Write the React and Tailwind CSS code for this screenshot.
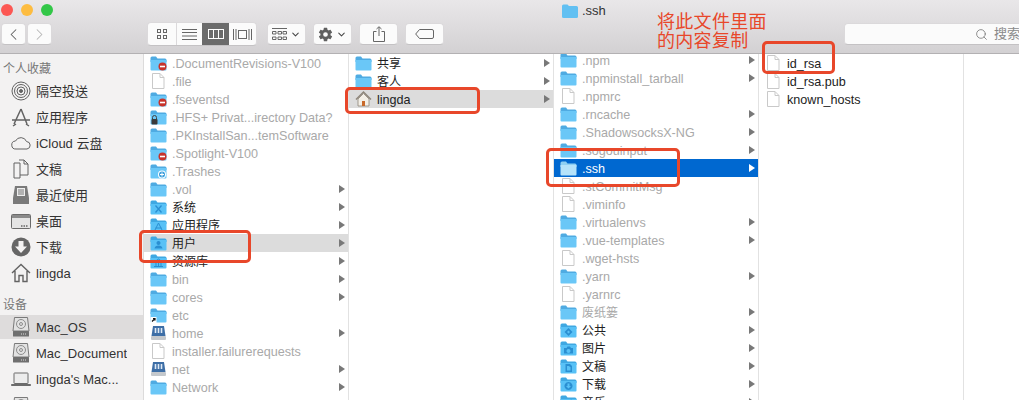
import React from 'react';
import { Search, ChevronLeft, ChevronRight, ChevronDown } from 'lucide-react';
import { IoSettingsSharp } from 'react-icons/io5';

const FONT = "font-['Liberation_Sans','Noto_Sans_CJK_SC',sans-serif]";

const column1 = [
  { name: '.DocumentRevisions-V100', dim: true, badge: 'minus' },
  { name: '.file', dim: true, file: true },
  { name: '.fseventsd', dim: true, badge: 'minus' },
  { name: '.HFS+ Privat...irectory Data?', dim: true, badge: 'lock' },
  { name: '.PKInstallSan...temSoftware', dim: true },
  { name: '.Spotlight-V100', dim: true, badge: 'minus' },
  { name: '.Trashes', dim: true, badge: 'plus' },
  { name: '.vol', dim: true, arrow: true },
  { name: '系统', glyph: 'x', arrow: true },
  { name: '应用程序', glyph: 'apps', arrow: true },
  { name: '用户', glyph: 'user', arrow: true, active: true },
  { name: '资源库', glyph: 'lib', arrow: true },
  { name: 'bin', dim: true, arrow: true },
  { name: 'cores', dim: true, arrow: true },
  { name: 'etc', dim: true, badge: 'alias' },
  { name: 'home', dim: true, disk: true, arrow: true },
  { name: 'installer.failurerequests', dim: true, file: true },
  { name: 'net', dim: true, disk: true, arrow: true },
  { name: 'Network', dim: true, arrow: true },
];

const column2 = [
  { name: '共享', arrow: true },
  { name: '客人', arrow: true },
  { name: 'lingda', home: true, arrow: true, active: true },
];

const column3 = [
  { name: '.npm', dim: true, arrow: true },
  { name: '.npminstall_tarball', dim: true, arrow: true },
  { name: '.npmrc', dim: true, file: true },
  { name: '.rncache', dim: true, arrow: true },
  { name: '.ShadowsocksX-NG', dim: true, arrow: true },
  { name: '.sogouinput', dim: true, arrow: true },
  { name: '.ssh', selected: true, arrow: true },
  { name: '.stCommitMsg', dim: true, file: true },
  { name: '.viminfo', dim: true, file: true },
  { name: '.virtualenvs', dim: true, arrow: true },
  { name: '.vue-templates', dim: true, arrow: true },
  { name: '.wget-hsts', dim: true, file: true },
  { name: '.yarn', dim: true, arrow: true },
  { name: '.yarnrc', dim: true, file: true },
  { name: '废纸篓', dim: true, arrow: true },
  { name: '公共', glyph: 'public', arrow: true },
  { name: '图片', glyph: 'camera', arrow: true },
  { name: '文稿', glyph: 'doc', arrow: true },
  { name: '下载', glyph: 'down', arrow: true },
  { name: '音乐', glyph: 'music', arrow: true },
];

const column4 = [
  { name: 'id_rsa', file: true },
  { name: 'id_rsa.pub', file: true },
  { name: 'known_hosts', file: true },
];

const Folder = ({ glyph, badge, selected }) => {
  const body = selected ? '#b5e3fa' : glyph ? '#58c1f6' : '#6ac7f7';
  const back = selected ? '#8fd0f2' : glyph ? '#3fa8e2' : '#4fabe2';
  const ink = '#2a8fd2';
  return (
    <svg width="17" height="15" viewBox="0 0 17 15" className="shrink-0">
      <path d="M0.5 2 Q0.5 0.5 2 0.5 H6 L7.5 2.5 H15 Q16.5 2.5 16.5 4 V6 H0.5 Z" fill={back} />
      <path d="M0.5 4 H16.5 V13.5 Q16.5 14.5 15.5 14.5 H1.5 Q0.5 14.5 0.5 13.5 Z" fill={body} />
      {glyph === 'x' && <path d="M5.5 5.5 L11.5 12.5 M11.5 5.5 L5.5 12.5" stroke={ink} strokeWidth="1.3" />}
      {glyph === 'apps' && <path d="M8.5 5 L5 12 M8.5 5 L12 12 M5.5 10 H11.5" stroke={ink} strokeWidth="1" fill="none" />}
      {glyph === 'user' && <path d="M8.5 5 a2 2 0 1 1 -0.01 0 M4.5 12.5 Q5 9.5 8.5 9.5 Q12 9.5 12.5 12.5 Z" fill={ink} />}
      {glyph === 'lib' && <path d="M4 12.5 H13 M5 7.5 H12 L8.5 5 Z M6 8 V12 M8.5 8 V12 M11 8 V12" stroke={ink} strokeWidth="1" fill="none" />}
      {glyph === 'public' && <path d="M8.5 5 L12.5 9 L8.5 13 L4.5 9 Z M8.5 7.5 L10 9 L8.5 10.5 L7 9 Z" fill={ink} fillRule="evenodd" />}
      {glyph === 'camera' && <path d="M4 7 H6.5 L7.5 5.5 H10 L11 7 H13 V12.5 H4 Z M8.5 8 a2 2 0 1 0 0.01 0" fill={ink} fillRule="evenodd" />}
      {glyph === 'doc' && <path d="M5.5 5 H10 L12 7 V13 H5.5 Z M7 7 V11.5 H10.5 V8 H9.5 V7 Z" fill={ink} fillRule="evenodd" />}
      {glyph === 'down' && <path d="M8.5 5 a4 4 0 1 0 0.01 0 M7.5 6.5 V9 H6 L8.5 11.5 L11 9 H9.5 V6.5 Z" fill={ink} fillRule="evenodd" />}
      {glyph === 'music' && <path d="M7 11 V6 L12 5 V10.5 M7 11 a1.3 1 0 1 1 -2.6 0 a1.3 1 0 1 1 2.6 0 M12 10.5 a1.3 1 0 1 1 -2.6 0 a1.3 1 0 1 1 2.6 0" stroke={ink} fill={ink} strokeWidth="0.6" />}
      {badge === 'minus' && (
        <g>
          <circle cx="12.5" cy="10.5" r="4" fill="#c8342c" />
          <rect x="10" y="9.7" width="5" height="1.6" fill="#fff" />
        </g>
      )}
      {badge === 'plus' && (
        <g>
          <circle cx="12" cy="10.5" r="4" fill="#fff" />
          <circle cx="12" cy="10.5" r="3" fill="#3d9fdc" />
          <path d="M12 8.5 V12.5 M10 10.5 H14" stroke="#fff" strokeWidth="1" />
        </g>
      )}
      {badge === 'lock' && (
        <g>
          <path d="M2.5 9 V7.5 a2 2 0 0 1 4 0 V9" stroke="#444" fill="none" strokeWidth="1" />
          <rect x="1.5" y="9" width="6" height="5.5" rx="1" fill="#3a3a3a" />
        </g>
      )}
      {badge === 'alias' && (
        <g>
          <rect x="0.5" y="9" width="6" height="6" fill="#fff" />
          <path d="M2 13.5 L5 10.5 M3 10.5 H5 V12.5" stroke="#111" strokeWidth="1.2" fill="none" />
        </g>
      )}
    </svg>
  );
};

const FileIcon = () => (
  <svg width="17" height="16" viewBox="0 0 17 16" className="shrink-0">
    <path d="M2.5 0.5 H10 L14 4.5 V15.5 H2.5 Z" fill="#fff" stroke="#c9c9c9" />
    <path d="M10 0.5 V4.5 H14" fill="none" stroke="#c9c9c9" />
  </svg>
);

const DiskIcon = () => (
  <svg width="17" height="16" viewBox="0 0 17 16" className="shrink-0">
    <path d="M3 1 H14 L15.5 11 H1.5 Z" fill="#3d6ea6" />
    <path d="M5.5 3 V8 M8.5 3 V8 M11.5 3 V8" stroke="#dfe9f3" strokeWidth="1.6" />
    <rect x="1" y="11" width="15" height="4" rx="1" fill="#c4c8cc" />
  </svg>
);

const HomeIcon = () => (
  <svg width="17" height="16" viewBox="0 0 17 16" className="shrink-0">
    <path d="M3 8 L8.5 2.5 L14 8 V15 H3 Z" fill="#f3efe6" stroke="#8d8579" strokeWidth="0.8" />
    <path d="M1 8.5 L8.5 1 L16 8.5" fill="none" stroke="#8d8579" strokeWidth="1.4" />
    <rect x="7" y="10" width="3" height="5" fill="#c8692a" />
  </svg>
);

const Row = ({ row }) => {
  let text = 'text-[#222]';
  let bg = '';
  if (row.dim) text = 'text-[#a9a9a9]';
  if (row.active) bg = 'bg-[#dcdcdc]';
  if (row.selected) {
    bg = 'bg-[#0068d0]';
    text = 'text-white';
  }
  // CJK names sit a bit narrower than latin ones in these columns
  const size = /^[\x00-\x7f]*$/.test(row.name) ? 'text-[12.6px]' : 'text-[12px]';
  return (
    <div className={`flex h-[18px] items-center pl-[6px] pr-[3px] ${bg}`}>
      <div className="flex w-[22px] shrink-0 items-center">
        {row.file ? <FileIcon /> : row.disk ? <DiskIcon /> : row.home ? <HomeIcon /> : <Folder glyph={row.glyph} badge={row.badge} selected={row.selected} />}
      </div>
      <span className={`grow truncate pt-[2px] leading-[16px] ${size} ${text}`}>{row.name}</span>
      {row.arrow && (
        <svg width="6" height="8" viewBox="0 0 6 8" className="shrink-0">
          <path d="M0 0 L6 4 L0 8 Z" fill={row.selected ? '#fff' : '#787878'} />
        </svg>
      )}
    </div>
  );
};

const Column = ({ rows, className = '' }) => (
  <div className={`w-[205px] shrink-0 border-r border-[#e2e2e2] ${className}`}>
    {rows.map((row) => (
      <Row key={row.name} row={row} />
    ))}
  </div>
);

const s = { stroke: '#636363', fill: 'none', strokeWidth: 1 };

const sideIcons = {
  airdrop: (
    <g {...s}>
      <circle cx="10" cy="10" r="9" />
      <circle cx="10" cy="10" r="6.5" />
      <circle cx="10" cy="10" r="4" />
      <circle cx="10" cy="10" r="1.5" fill="#636363" />
    </g>
  ),
  apps: <path d="M10 2 L3 17 M10 2 L16 17 M1 13 H19 M5 17 L2 19 M15 17 L18 19" {...s} strokeWidth="1.5" />,
  cloud: <path d="M5 16 a4 4 0 0 1 -0.5 -8 a6 6 0 0 1 11 0.5 a4 3.8 0 0 1 0.5 7.5 Z" {...s} />,
  doc: (
    <g {...s}>
      <path d="M3 4 H9 V19 H3 Z" />
      <path d="M8 1 H13 L17 5 V16 H9" />
      <path d="M13 1 V5 H17" />
    </g>
  ),
  recent: (
    <g>
      <path d="M4 1 H16 L18 13 V19 H2 V13 Z" fill="#7a7a7a" />
      <path d="M6 3 H14 V11 H6 Z" fill="#eee" />
      <path d="M7 5 H13 M7 7 H13 M7 9 H13" stroke="#777" />
    </g>
  ),
  desktop: (
    <g>
      <rect x="0.5" y="3.5" width="19" height="14" rx="1" fill="#e4e4e4" stroke="#6b6b6b" />
      <rect x="1" y="4" width="18" height="3" fill="#8a8a8a" />
      <path d="M10 15 H17" stroke="#666" strokeWidth="1.4" strokeDasharray="1.5 1" />
    </g>
  ),
  download: (
    <g>
      <circle cx="10" cy="10" r="9.5" fill="#666" />
      <path d="M7.5 4 H12.5 V9.5 H16 L10 16 L4 9.5 H7.5 Z" fill="#f3f2f2" />
    </g>
  ),
  home: <path d="M1 10 L10 1.5 L19 10 M4 8 V18.5 H8 V12.5 H12 V18.5 H16 V8" {...s} strokeWidth="1.4" />,
  disk: (
    <g>
      <path d="M3.5 0.5 H16.5 L18 14 H2 Z" fill="#e2e2e2" stroke="#7a7a7a" />
      <circle cx="10" cy="7" r="4.5" fill="none" stroke="#8c8c8c" />
      <circle cx="10" cy="7" r="1.5" fill="none" stroke="#8c8c8c" />
      <rect x="2" y="14" width="16" height="5.5" rx="0.5" fill="#6f6f6f" />
      <path d="M10 17 H16" stroke="#ddd" strokeDasharray="1 1" />
    </g>
  ),
  laptop: (
    <g {...s}>
      <rect x="3" y="4" width="14" height="10.5" rx="0.5" fill="#ececec" stroke="#6b6b6b" />
      <path d="M0.5 15.5 H19.5 V16.5 H0.5 Z" fill="#8a8a8a" stroke="#6b6b6b" />
    </g>
  ),
};

const SideRow = ({ icon, label, active }) => (
  <div className="h-[26px] py-px">
    <div className={`flex h-full items-center pl-[11px] ${active ? 'bg-[#dedcdc]' : ''}`}>
      <svg width="20" height="20" viewBox="0 0 20 20" className="mr-[5px] shrink-0">
        {sideIcons[icon]}
      </svg>
      <span className="truncate pt-[2px] text-[13px] leading-[16px] text-[#333]">{label}</span>
    </div>
  </div>
);

const SideHeader = ({ label, className }) => (
  <div className={`h-[18px] pl-[3px] pt-[2px] text-[12px] leading-[16px] text-[#777] ${className}`}>{label}</div>
);

const Sidebar = () => (
  <div className="w-[144px] shrink-0 border-r border-[#dcdbdb] bg-[#f3f2f2]">
    <SideHeader label="个人收藏" className="mt-[5px] mb-px" />
    <SideRow icon="airdrop" label="隔空投送" />
    <SideRow icon="apps" label="应用程序" />
    <SideRow icon="cloud" label="iCloud 云盘" />
    <SideRow icon="doc" label="文稿" />
    <SideRow icon="recent" label="最近使用" />
    <SideRow icon="desktop" label="桌面" />
    <SideRow icon="download" label="下载" />
    <SideRow icon="home" label="lingda" />
    <SideHeader label="设备" className="mt-[9px] mb-px" />
    <SideRow icon="disk" label="Mac_OS" active />
    <SideRow icon="disk" label="Mac_Document" />
    <SideRow icon="laptop" label="lingda's Mac..." />
    <div className="pl-[11px] pt-[5px]">
      <svg width="20" height="20" viewBox="0 0 20 20">
        {sideIcons.disk}
      </svg>
    </div>
  </div>
);

const Btn = ({ className = '', children }) => (
  <div className={`flex h-[22px] items-center justify-center gap-[3px] rounded-[4px] border border-[#dbd9db] border-b-[#c4c2c4] bg-[#fbfbfb] text-[#5f5f5f] ${className}`}>
    {children}
  </div>
);

const ViewSwitch = () => (
  <div className="flex h-[24px] w-[110px] shrink-0 overflow-hidden rounded-[4px] border border-[#dbd9db] border-b-[#c4c2c4] bg-[#fbfbfb]">
    <div className="flex w-[28px] items-center justify-center">
      <svg width="12" height="12" viewBox="0 0 12 12" fill="none" stroke="#666">
        <rect x="1.5" y="1.5" width="3" height="3" />
        <rect x="7.5" y="1.5" width="3" height="3" />
        <rect x="1.5" y="7.5" width="3" height="3" />
        <rect x="7.5" y="7.5" width="3" height="3" />
      </svg>
    </div>
    <div className="flex w-[26px] items-center justify-center border-l border-[#dbd9db]">
      <svg width="15" height="11" viewBox="0 0 15 11" stroke="#666">
        <path d="M0 0.5 H15 M0 3.5 H15 M0 7 H15 M0 10.5 H15" />
      </svg>
    </div>
    <div className="flex w-[27px] items-center justify-center bg-[#6b6b6b]">
      <svg width="16" height="10" viewBox="0 0 16 10" fill="none" stroke="#fff">
        <rect x="0.5" y="0.5" width="15" height="9" />
        <path d="M5.5 0 V10 M10.5 0 V10" />
      </svg>
    </div>
    <div className="flex grow items-center justify-center">
      <svg width="19" height="11" viewBox="0 0 19 11" fill="none" stroke="#666">
        <rect x="5.5" y="1.5" width="8" height="8" />
        <path d="M0.5 0 V11 M3 0 V11 M16 0 V11 M18.5 0 V11" />
      </svg>
    </div>
  </div>
);

const Toolbar = () => (
  <div className="flex h-[54px] shrink-0 flex-col border-b border-[#b3b1b3] bg-gradient-to-b from-[#e9e7e9] to-[#d3d1d3]">
    <div className="flex h-[23px] shrink-0 items-start">
      <div className="flex gap-[8px] pl-[1px] pt-[4px]">
        <span className="h-[12px] w-[12px] rounded-full bg-[#fc5753]" />
        <span className="h-[12px] w-[12px] rounded-full bg-[#fdbc40]" />
        <span className="h-[12px] w-[12px] rounded-full bg-[#33c748]" />
      </div>
      <div className="ml-[509px] flex items-center gap-[4px] pt-[2px]">
        <svg width="16" height="14" viewBox="0 0 16 14">
          <path d="M0 2 Q0 0.5 1.5 0.5 H5.5 L7 2 H14.5 Q16 2 16 3.5 V12.5 Q16 14 14.5 14 H1.5 Q0 14 0 12.5 Z" fill="#62c0f2" />
        </svg>
        <span className="text-[13px] leading-[18px] text-[#333]">.ssh</span>
      </div>
    </div>
    <div className="flex items-start pl-[1px]">
      <Btn className="w-[25px] shrink-0">
        <ChevronLeft size={19} strokeWidth={1.3} />
      </Btn>
      <Btn className="ml-px w-[25px] shrink-0">
        <ChevronRight size={19} strokeWidth={1.3} className="text-[#b5b5b5]" />
      </Btn>
      <div className="ml-[95px] -mt-px">
        <ViewSwitch />
      </div>
      <Btn className="ml-[10px] w-[39px] shrink-0">
        <svg width="15" height="13" viewBox="0 0 15 13" fill="none" stroke="#666">
          <path d="M0 0.5 H15" />
          <path d="M0.5 3.5 H4 V6 H0.5 Z M6 3.5 H9.5 V6 H6 Z M11 3.5 H14.5 V6 H11 Z M0.5 9 H4 V11.5 H0.5 Z M6 9 H9.5 V11.5 H6 Z M11 9 H14.5 V11.5 H11 Z" />
        </svg>
        <ChevronDown size={11} strokeWidth={2.2} className="text-[#444]" />
      </Btn>
      <Btn className="ml-[7px] w-[39px] shrink-0">
        <IoSettingsSharp size={15} />
        <ChevronDown size={11} strokeWidth={2.2} className="text-[#444]" />
      </Btn>
      <Btn className="ml-[7px] w-[39px] shrink-0">
        <svg width="12" height="16" viewBox="0 0 12 16" fill="none" stroke="#666">
          <path d="M3.5 5.5 H0.5 V15.5 H11.5 V5.5 H8.5 M6 10 V1 M3.5 3 L6 0.7 L8.5 3" />
        </svg>
      </Btn>
      <Btn className="ml-[7px] w-[39px] shrink-0">
        <svg width="19" height="10" viewBox="0 0 19 10" fill="none" stroke="#666">
          <path d="M4.5 0.5 H17 Q18.5 0.5 18.5 2 V8 Q18.5 9.5 17 9.5 H4.5 L0.7 5 Z" />
        </svg>
      </Btn>
      <div className="ml-[400px] flex h-[22px] w-[200px] shrink-0 items-center rounded-[4px] border border-[#dbd9db] border-b-[#c4c2c4] bg-[#fbfbfb] pl-[130px] text-[#777]">
        <Search size={13} strokeWidth={1.5} />
        <span className="ml-[6px] whitespace-nowrap text-[13px] leading-[18px] text-[#8a8a8a]">搜索</span>
      </div>
    </div>
  </div>
);

const Mark = ({ className }) => (
  <div className={`absolute rounded-[5px] border-[3px] border-[#e8472a] ${className}`} />
);

export default function App() {
  return (
    <div className={`relative flex h-[400px] w-[1019px] flex-col overflow-hidden bg-white ${FONT}`}>
      <Toolbar />
      <div className="flex min-h-0 grow overflow-hidden">
        <Sidebar />
        <Column rows={column1} />
        <Column rows={column2} />
        <Column rows={column3} className="-mt-[3px]" />
        <Column rows={column4} />
      </div>

      {/* red annotations drawn over the screenshot */}
      <Mark className="left-[139px] top-[230px] h-[33px] w-[112px]" />
      <Mark className="left-[345px] top-[87px] h-[27px] w-[135px]" />
      <Mark className="left-[546px] top-[148px] h-[39px] w-[134px]" />
      <Mark className="left-[762px] top-[41px] h-[33px] w-[73px]" />
      <div className="absolute left-[657px] top-[13px] text-[18px] leading-[19px] tracking-[0.3px] text-[#e8472a]">
        <div>将此文件里面</div>
        <div>的内容复制</div>
      </div>
    </div>
  );
}
